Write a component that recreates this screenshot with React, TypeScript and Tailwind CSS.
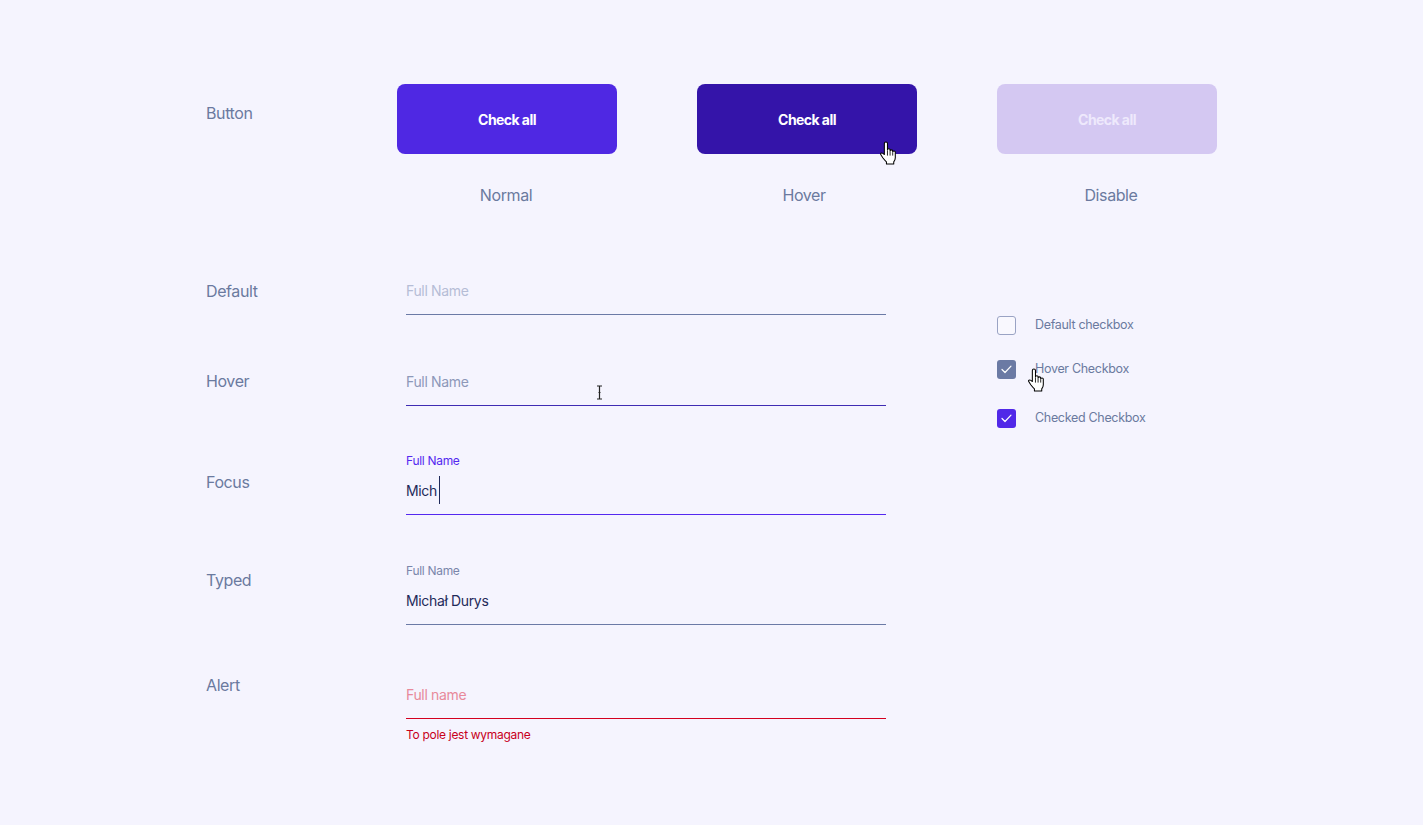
import React from 'react'

const font = { fontFamily: 'Inter, "Liberation Sans", sans-serif' }

function HandCursor({ className }: { className?: string }) {
  return (
    <svg className={className} width="18" height="24" viewBox="0 0 17 23">
      <path
        d="M5 2.5 Q5 1 6.5 1 Q8 1 8 2.5 V8.5 Q8 7.5 9.25 7.5 Q10.5 7.5 10.5 8.5 V9.5 Q10.5 8.5 11.75 8.5 Q13 8.5 13 9.5 V10.5 Q13 9.5 14.25 9.5 Q15.5 9.5 15.5 10.5 V16 Q15.5 18 14 20 V22 H7 V20 Q5 18 3.5 16 L1.5 13 Q1 11.5 2.5 11.5 Q3.5 11.5 5 13 Z"
        fill="#fff"
        stroke="#000"
        strokeWidth="1"
        strokeLinejoin="round"
      />
      <path d="M8 9 V14 M10.5 10 V14 M13 11 V14" stroke="#000" strokeWidth="0.8" />
    </svg>
  )
}

function IBeam({ className }: { className?: string }) {
  return (
    <svg className={className} width="7" height="15" viewBox="0 0 7 15">
      <path d="M1 1 H6 M3.5 1 V14 M1 14 H6 M2.5 7.5 H4.5" stroke="#222" strokeWidth="1.2" fill="none" />
    </svg>
  )
}

function Check() {
  return (
    <svg width="11" height="9" viewBox="0 0 11 9" fill="none">
      <path d="M1 4.5 L4 7.5 L10 1.2" stroke="#fff" strokeWidth="1.2" strokeLinecap="round" strokeLinejoin="round" />
    </svg>
  )
}

interface FieldProps {
  rowLabel: string
  labelPt: string
  label?: string
  labelClass?: string
  reserveLabel?: boolean
  value: React.ReactNode
  valueClass: string
  lineClass: string
  className?: string
  after?: React.ReactNode
}

function FieldRow({ rowLabel, labelPt, label, labelClass, reserveLabel, value, valueClass, lineClass, className, after }: FieldProps) {
  return (
    <div className={`flex ${className ?? ''}`}>
      <div className={`w-[200px] text-[16px] leading-6 text-[#6b7a9f] tracking-tight ${labelPt}`}>{rowLabel}</div>
      <div className="w-[480px] relative">
        {(label || reserveLabel) && (
          <div className={`h-[18px] mb-[8px] text-[12px] leading-[18px] tracking-tight ${labelClass ?? ''}`}>{label}</div>
        )}
        <div className={`h-6 flex items-center text-[14px] tracking-tight ${valueClass}`}>{value}</div>
        <div className={`mt-[12px] h-px ${lineClass}`} />
        {after}
      </div>
    </div>
  )
}

export default function App() {
  const buttons = [
    { caption: 'Normal', cls: 'bg-[#4f28e3] text-white', cursor: false, capCls: '-ml-[2px]' },
    { caption: 'Hover', cls: 'bg-[#3414a9] text-white', cursor: true, capCls: '-ml-[6px]' },
    { caption: 'Disable', cls: 'bg-[#d4c8f2] text-[#eee9fc]', cursor: false, capCls: 'ml-[8px]' },
  ]

  const checkboxes = [
    { label: 'Default checkbox', box: 'border-[1.5px] border-[#9aa3c4] bg-white/40', check: false, mt: '' },
    { label: 'Hover Checkbox', box: 'bg-[#6b7aa4]', check: true, mt: 'mt-[25px]' },
    { label: 'Checked Checkbox', box: 'bg-[#5128e8]', check: true, mt: 'mt-[30px]' },
  ]

  return (
    <div className="min-h-screen bg-[#f5f4fe] pl-[206px] pt-[84px]" style={font}>
      {/* Buttons */}
      <div className="flex">
        <div className="w-[191px] pt-[17px] text-[16px] leading-6 text-[#6b7a9f] tracking-tight">Button</div>
        <div className="flex gap-[80px]">
          {buttons.map(b => (
            <div key={b.caption} className="w-[220px] flex flex-col items-center relative">
              <div className={`w-full h-[70px] rounded-[8px] flex items-center justify-center text-[14px] font-bold tracking-[-0.04em] ${b.cls}`}>
                Check all
              </div>
              <div className={`mt-[29px] text-[16px] leading-6 text-[#6b7a9f] tracking-tight ${b.capCls}`}>{b.caption}</div>
              {b.cursor && <HandCursor className="absolute left-[182px] top-[57px]" />}
            </div>
          ))}
        </div>
      </div>

      {/* Inputs + checkboxes */}
      <div className="flex mt-[71px]">
        <div className="flex flex-col">
          <FieldRow
            rowLabel="Default"
            labelPt="pt-[1px]"
            value="Full Name"
            valueClass="text-[#b6bdd6]"
            lineClass="bg-[#6b7aa6]"
          />
          <FieldRow
            className="mt-[54px]"
            rowLabel="Hover"
            labelPt="pt-0"
            value="Full Name"
            valueClass="text-[#8d98b9]"
            lineClass="bg-[#3f2cb3]"
            after={<IBeam className="absolute left-[190px] top-[16px]" />}
          />
          <FieldRow
            className="mt-[46px]"
            rowLabel="Focus"
            labelPt="pt-[18px]"
            label="Full Name"
            labelClass="text-[#5428f0]"
            value={
              <>
                <span>Mich</span>
                <span className="inline-block w-px h-[28px] bg-[#1f2a5a] ml-[2px]" />
              </>
            }
            valueClass="text-[#1f2a5a]"
            lineClass="bg-[#5428f0]"
          />
          <FieldRow
            className="mt-[47px]"
            rowLabel="Typed"
            labelPt="pt-[6px]"
            label="Full Name"
            labelClass="text-[#7a86ab]"
            value="Michał Durys"
            valueClass="text-[#1f2a5a]"
            lineClass="bg-[#6b7aa6]"
          />
          <FieldRow
            className="mt-[31px]"
            rowLabel="Alert"
            labelPt="pt-[17px]"
            reserveLabel
            value="Full name"
            valueClass="text-[#e8899b]"
            lineClass="bg-[#d4001f]"
            after={<div className="mt-[8px] text-[12px] leading-4 text-[#c8001c] tracking-tight">To pole jest wymagane</div>}
          />
        </div>

        <div className="ml-[111px] pt-[38px] flex flex-col">
          {checkboxes.map(c => (
            <div key={c.label} className={`flex items-center relative ${c.mt}`}>
              <div className={`w-[19px] h-[19px] rounded-[3px] flex items-center justify-center ${c.box}`}>
                {c.check && <Check />}
              </div>
              <span className="ml-[19px] text-[12.5px] text-[#6b7a9f] tracking-tight">{c.label}</span>
              {c.label === 'Hover Checkbox' && <HandCursor className="absolute left-[30px] top-[8px]" />}
            </div>
          ))}
        </div>
      </div>
    </div>
  )
}
